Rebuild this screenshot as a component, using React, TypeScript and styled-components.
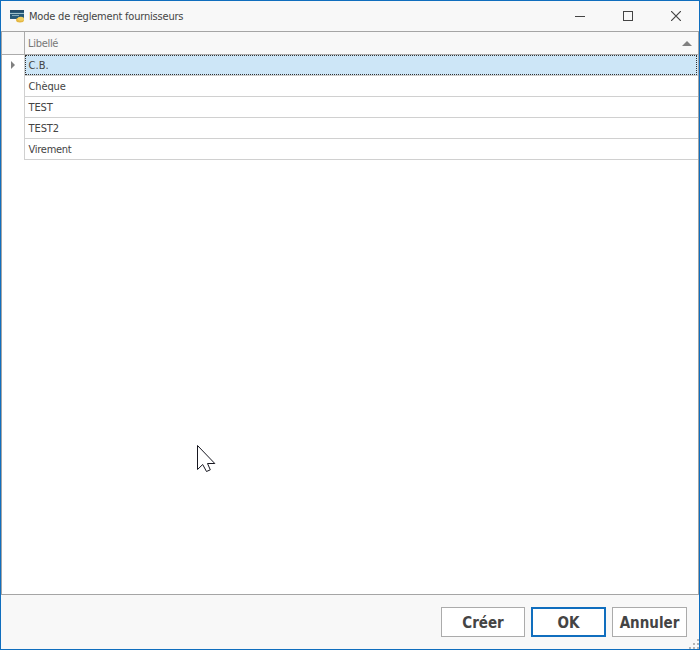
import React from "react";
import styled, { createGlobalStyle } from "styled-components";

const Global = createGlobalStyle`
  * { box-sizing: border-box; }
  body { margin: 0; background: #f8f8f8; overflow: hidden; }
`;

const Window = styled.div`
  position: relative;
  display: flex;
  flex-direction: column;
  width: 700px;
  height: 650px;
  border: 1px solid #106ebe;
  background: #f8f8f8;
  color: #444;
  font: 11px "DejaVu Sans Condensed", "DejaVu Sans", Tahoma, sans-serif;
  font-stretch: condensed;
  cursor: default;
`;

const TitleBar = styled.header`
  display: flex;
  align-items: center;
  height: 30px;
  padding-left: 9px;
  margin-right: -1px;
`;

const Title = styled.span`
  flex: 1;
  margin-left: 4px;
  padding-top: 2px;
  line-height: 30px;
  letter-spacing: -0.2px;
  white-space: nowrap;
`;

const WindowButton = styled.button`
  display: flex;
  align-items: center;
  justify-content: center;
  width: 48px;
  height: 30px;
  padding: 0;
  border: 0;
  background: transparent;
`;

const Grid = styled.main`
  flex: 1;
  border: 1px solid #a5a5a5;
  background: #fff;
`;

const HeaderRow = styled.div`
  display: grid;
  grid-template-columns: 23px 1fr;
  height: 23px;
  border-bottom: 1px solid #ababab;
  background: #f8f8f8;
`;

const Indicator = styled.div<{ $header?: boolean }>`
  display: flex;
  align-items: center;
  justify-content: center;
  padding-bottom: 1px;
  border-right: 1px solid ${(p) => (p.$header ? "#ababab" : "#d0d0d0")};
`;

const HeaderCell = styled.div`
  display: flex;
  align-items: center;
  justify-content: space-between;
  padding: 0 6px 0 3px;
  color: #777;
  letter-spacing: -0.3px;
`;

const Row = styled.div`
  display: grid;
  grid-template-columns: 23px 1fr;
  height: 21px;
`;

const Cell = styled.div<{ $selected?: boolean; $spacing: number }>`
  border-bottom: 1px solid #d0d0d0;
  background: ${(p) => (p.$selected ? "#cde6f7" : "#fff")};
  letter-spacing: ${(p) => p.$spacing}px;
`;

const CellText = styled.div<{ $selected?: boolean }>`
  height: 20px;
  padding-left: ${(p) => (p.$selected ? 2.6 : 3.6)}px;
  line-height: ${(p) => (p.$selected ? 20 : 22)}px;
  margin-right: 1px;
  border: ${(p) => (p.$selected ? "1px dotted #333" : "0")};
`;

const Footer = styled.footer`
  display: flex;
  justify-content: flex-end;
  gap: 6px;
  height: 54px;
  padding: 12px 12px 0 0;
`;

const Button = styled.button<{ $width: number; $primary?: boolean }>`
  width: ${(p) => p.$width}px;
  height: 30px;
  padding: 2px 0 0;
  border: ${(p) => (p.$primary ? "2px solid #106ebe" : "1px solid #ababab")};
  background: #fff;
  color: #444;
  font: bold 15px "DejaVu Sans Condensed", "DejaVu Sans", Tahoma, sans-serif;
  font-stretch: condensed;
`;

const ResizeGrip = styled.svg`
  position: absolute;
  right: 0;
  bottom: 0;
`;

const Pointer = styled.svg`
  position: absolute;
  left: 196px;
  top: 444px;
`;

const CardIcon = () => (
  <svg width="15" height="14" viewBox="0 0 15 14">
    <rect x="0" y="1" width="14" height="9" rx="0.5" fill="#285a78" />
    <rect x="0" y="1" width="14" height="2" fill="#244c69" />
    <rect x="0" y="4" width="14" height="1" fill="#9fc0ca" />
    <rect x="2" y="6" width="7" height="1" fill="#83a9b8" />
    <ellipse cx="10" cy="11" rx="4" ry="2.5" fill="#e4b743" />
    <ellipse cx="10.8" cy="9.7" rx="3.2" ry="2" fill="#f2cf62" />
  </svg>
);

const rows = [
  { label: "C.B.", spacing: 0 },
  { label: "Chèque", spacing: -0.15 },
  { label: "TEST", spacing: -0.15 },
  { label: "TEST2", spacing: -0.1 },
  { label: "Virement", spacing: -0.28 },
];

export default function App() {
  return (
    <>
      <Global />
      <Window>
        <TitleBar>
          <CardIcon />
          <Title>Mode de règlement fournisseurs</Title>
          <WindowButton aria-label="Réduire">
            <svg width="10" height="10"><path d="M0 5.5H10" stroke="#444" /></svg>
          </WindowButton>
          <WindowButton aria-label="Agrandir">
            <svg width="10" height="10"><rect x=".5" y=".5" width="9" height="9" fill="none" stroke="#444" /></svg>
          </WindowButton>
          <WindowButton aria-label="Fermer">
            <svg width="10" height="10"><path d="M0 0L10 10M10 0L0 10" stroke="#444" strokeWidth="1.2" /></svg>
          </WindowButton>
        </TitleBar>
        <Grid>
          <HeaderRow>
            <Indicator $header />
            <HeaderCell>
              Libellé
              <svg width="10" height="5"><path d="M0 5L5 0L10 5Z" fill="#808080" /></svg>
            </HeaderCell>
          </HeaderRow>
          {rows.map((row, i) => (
            <Row key={row.label}>
              <Indicator>
                {i === 0 && <svg width="4" height="8"><path d="M0 0L4 4L0 8Z" fill="#808080" /></svg>}
              </Indicator>
              <Cell $selected={i === 0} $spacing={row.spacing}>
                <CellText $selected={i === 0}>{row.label}</CellText>
              </Cell>
            </Row>
          ))}
        </Grid>
        <Footer>
          <Button $width={84}>Créer</Button>
          <Button $width={75} $primary>OK</Button>
          <Button $width={75}>Annuler</Button>
        </Footer>
        <ResizeGrip width="11" height="11" fill="#b5b5b5">
          <path d="M9 1h2v2h-2zM5 5h2v2h-2zM9 5h2v2h-2zM1 9h2v2h-2zM5 9h2v2h-2zM9 9h2v2h-2z" />
        </ResizeGrip>
        <Pointer width="20" height="28">
          <path d="M.5 .5V24.5L5.7 19.5L9.5 26.5L13.3 24.8L10.5 18.5H17.8Z" fill="#fff" stroke="#171720" />
        </Pointer>
      </Window>
    </>
  );
}
